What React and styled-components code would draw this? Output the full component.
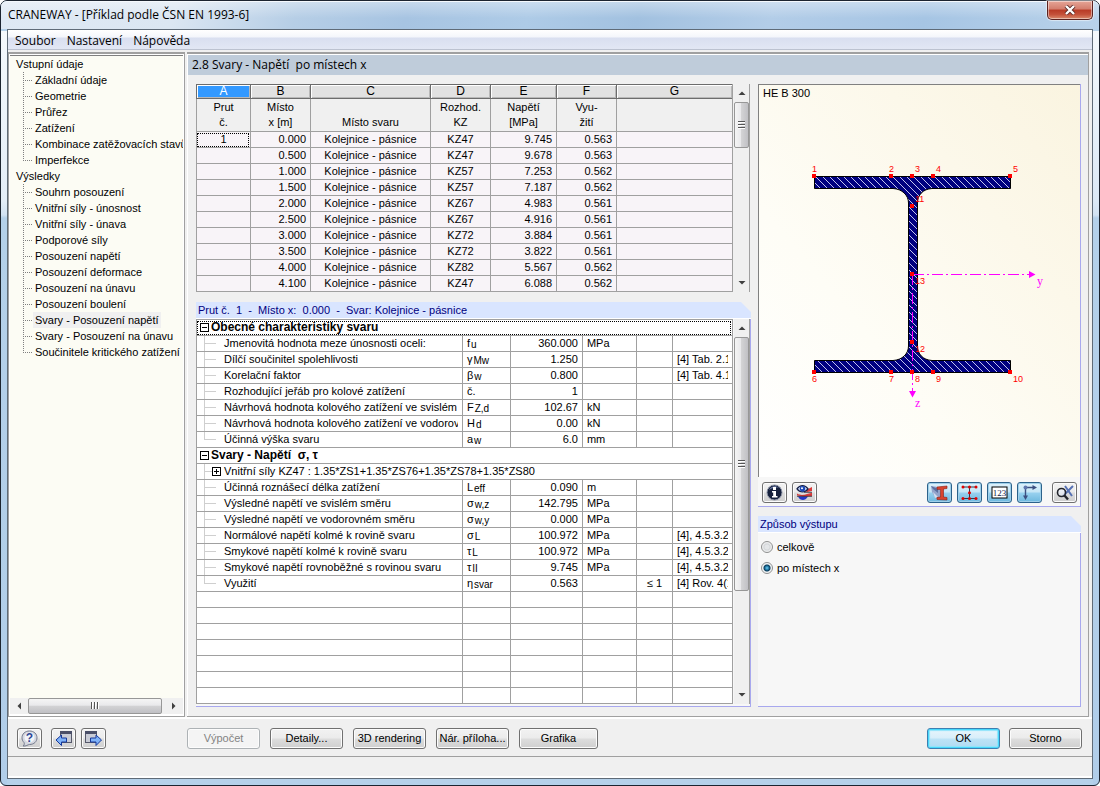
import React, { useState } from "react";
import styled, { createGlobalStyle, css } from "styled-components";

const GlobalStyle = createGlobalStyle`
  *, *::before, *::after { box-sizing: border-box; }
  html, body { margin: 0; padding: 0; }
  body {
    background: #fff;
    color: #000;
    font: 11px/16px "Liberation Sans", Arial, sans-serif;
  }
  button, input { font: inherit; color: inherit; margin: 0; }
`;

const UI_FONT = '"Open Sans", "Noto Sans", sans-serif';
const LINE = "#a0a0a0";
const EDGE = "#a8a8ee";

/* ---------- window frame ---------- */

const Window = styled.div`
  display: flex;
  flex-direction: column;
  min-height: 100vh;
  min-width: 1000px;
  padding: 0 6px 6px;
  border: 1px solid #1c2430;
  border-radius: 7px 7px 6px 6px;
  background:
    linear-gradient(#f4f8fc, #e3edf8 170px, #d2e2f3 184px, #b4d0ea 187px, #b0cde9) left 30px / 6px 100% no-repeat,
    linear-gradient(#f4f8fc, #dce9f6 170px, #d2e2f3 184px, #b4d0ea 187px, #b0cde9) right 30px / 6px 100% no-repeat,
    #b5d1ea;
`;

const TitleBar = styled.header`
  display: flex;
  justify-content: space-between;
  align-items: flex-start;
  height: 28px;
  margin: 0 -6px;
  padding-left: 7px;
  border-top: 1px solid #f5f9fd;
  border-radius: 6px 6px 0 0;
  background:
    linear-gradient(rgba(255,255,255,.35), rgba(255,255,255,0) 60%),
    linear-gradient(105deg, #dfe9f4 0, #dbe6f2 16%, #b6cee6 27%, #a7c4e2 37%, #aecbe7 48%, #a2c1e0 58%, #b3cde8 70%, #a6c5e4 84%, #b9d2ea 100%);
`;

const Title = styled.h1`
  margin: 0;
  font: 12px/26px ${UI_FONT};
`;

const CloseButton = styled.button`
  display: grid;
  place-items: center;
  width: 46px;
  height: 19px;
  margin: -1px 6px 0 0;
  padding: 0;
  border: 1px solid #5b2320;
  border-top: 0;
  border-radius: 0 0 5px 5px;
  box-shadow: inset 0 0 0 1px rgba(255,255,255,.45), 0 0 1px 1px rgba(255,255,255,.5);
  background: linear-gradient(#e6a597 0, #d37d6d 45%, #b83a25 50%, #c4513a 75%, #d98a6c 100%);
`;

const Client = styled.div`
  display: flex;
  flex: 1;
  flex-direction: column;
  border: 1px solid #5f6b78;
  background: #f0f0f0;
`;

const MenuBar = styled.nav`
  display: flex;
  gap: 11px;
  height: 22px;
  padding-left: 7px;
  border-bottom: 2px solid #f0f0f0;
  background: linear-gradient(#fff 0, #f4f6fb 7px, #d9dff0 8px, #e2e7f4 19px, #bcc2d0 19px);
`;

const MenuItem = styled.button`
  padding: 0;
  border: 0;
  background: none;
  font: 12px/19px ${UI_FONT};
`;

const Main = styled.main`
  display: flex;
  flex: 1;
  gap: 2px;
  padding-right: 3px;
  border-bottom: 1px solid #fff;
`;

/* ---------- navigation tree ---------- */

const TreePanel = styled.aside`
  display: flex;
  flex-direction: column;
  flex: 0 0 177px;
  min-width: 0;
  border: 1px solid ${LINE};
  border-top-width: 2px;
  padding: 1px 1px 2px;
  background: #fff;
`;

const TreeBody = styled.div`
  flex: 1;
  overflow: hidden;
  border-top: 1px solid #808080;
  background: #fcfcf4;
  white-space: nowrap;
`;

const TreeList = styled.ul`
  margin: 0;
  padding: 0;
  list-style: none;
`;

const TreeHead = styled.a`
  display: block;
  padding-left: 6px;
  color: inherit;
  text-decoration: none;
`;

const TreeLeaf = styled.li`
  height: 16px;
  padding-left: 23px;
  background:
    repeating-linear-gradient(#808080 0 1px, transparent 1px 2px) 13px 0 / 1px ${(p) => (p.$last ? "9px" : "16px")} no-repeat,
    repeating-linear-gradient(90deg, #808080 0 1px, transparent 1px 2px) 13px 8px / 9px 1px no-repeat;
`;

const TreeLink = styled.a`
  display: inline-block;
  padding: 0 2px;
  color: inherit;
  text-decoration: none;
  background: ${(p) => (p.$active ? "#f0f0f0" : "transparent")};
`;

/* ---------- scroll bars ---------- */

const HTrack = styled.div`
  display: flex;
  height: 16px;
  background: #f0f0f0;
`;

const VTrack = styled.div`
  display: flex;
  flex-direction: column;
  flex: 0 0 16px;
  margin-left: 1px;
  border-right: 1px solid ${LINE};
  background: #f0f0f0;
`;

const ArrowButton = styled.button`
  display: grid;
  place-items: center;
  flex: 0 0 18px;
  padding: 0;
  border: 0;
  background: none;
`;

const Thumb = styled.div`
  display: grid;
  place-items: center;
  flex: 0 0 ${(p) => p.$size}px;
  border: 1px solid #979797;
  border-radius: 2px;
  background: linear-gradient(${(p) => (p.$vertical ? "90deg" : "180deg")}, #f5f5f5, #e9e9eb 45%, #d3d3d5 50%, #c0c0c4);
`;

const Spacer = styled.div`
  flex: 1;
`;

const ARROWS = {
  up: "M0.500 6L4 2.500L7.500 6Z",
  down: "M0.500 2L4 5.500L7.500 2Z",
  left: "M6 0.500L2.500 4L6 7.500Z",
  right: "M2 0.500L5.500 4L2 7.500Z",
};

function Arrow({ dir }) {
  return (
    <ArrowButton aria-label={dir}>
      <svg width="8" height="8" viewBox="0 0 8 8">
        <path d={ARROWS[dir]} fill="#404040" />
      </svg>
    </ArrowButton>
  );
}

function VScroll({ size }) {
  return (
    <VTrack>
      <Arrow dir="up" />
      <Thumb $vertical $size={size}>
        <svg width="8" height="8" viewBox="0 0 8 8" shapeRendering="crispEdges">
          <path d="M0 0h7v1H0zM0 3h7v1H0zM0 6h7v1H0z" fill="#555" />
          <path d="M0 1h7v1H0zM0 4h7v1H0zM0 7h7v1H0z" fill="#fff" />
        </svg>
      </Thumb>
      <Spacer />
      <Arrow dir="down" />
    </VTrack>
  );
}

/* ---------- content panel ---------- */

const Content = styled.section`
  flex: 1;
  min-width: 0;
  display: flex;
  flex-direction: column;
  border: solid ${LINE};
  border-width: 2px 1px 1px 0;
  box-shadow: inset 1px 1px 0 #fff;
  padding: 1px 0 0 1px;
`;

const PageTitle = styled.h2`
  margin: 0;
  padding-left: 4px;
  background: #bfccda;
  font: 12px/20px ${UI_FONT};
  white-space: pre;
`;

const Columns = styled.div`
  display: flex;
  flex: 1;
  gap: 7px;
  padding: 9px 7px 9px 8px;
`;

const LeftColumn = styled.div`
  flex: 1;
  min-width: 0;
  display: flex;
  flex-direction: column;
  gap: 10px;
`;

const RightColumn = styled.div`
  flex: 0 0 323px;
  display: flex;
  flex-direction: column;
  gap: 9px;
`;

const TableRow = styled.div`
  display: flex;
`;

const TopGrid = styled(TableRow)`
  padding-right: 1px;
`;

const DetailGrid = styled(TableRow)`
  padding-bottom: 2px;
`;

const GroupBox = styled.section`
  display: flex;
  flex-direction: column;
  flex: ${(p) => p.$flex || "none"};
  border: solid ${EDGE};
  border-width: 0 1px 1px 0;
  background: #f7f7f7;
`;

const CutHeader = styled.div`
  margin-right: -1px;
  background: #f0f0f0;
`;

const GroupTitle = styled.h3`
  margin: 0;
  padding-left: 2px;
  border-bottom: 1px solid #fff;
  background: #d9e5ff;
  clip-path: polygon(0 0, calc(100% - 10px) 0, 100% 10px, 100% 100%, 0 100%);
  color: #000080;
  font: inherit;
  white-space: pre;
`;

/* ---------- tables ---------- */

const Table = styled.table`
  flex: 1;
  width: 0;
  min-width: 0;
  table-layout: fixed;
  border-collapse: separate;
  border-spacing: 0;
  border-right: 1px solid ${LINE};
`;

const Letter = styled.th`
  height: 15px;
  padding: 0;
  border: solid #6c6c6c;
  border-width: 1px 0 1px 1px;
  box-shadow: inset 1px 1px 0 #fff, inset -1px -1px 0 #b8b8b8;
  background: ${(p) => (p.$active ? "#3399ff" : "#e1e1e1")};
  color: ${(p) => (p.$active ? "#fff" : "#000")};
  font: 12px/13px "Liberation Sans", Arial, sans-serif;
`;

const HeadCell = styled.th`
  height: 33px;
  padding: 0 0 1px;
  border: solid ${LINE};
  border-width: 0 0 1px 1px;
  vertical-align: bottom;
  background: #f0f0f0;
  font-weight: normal;
  line-height: 15px;
  white-space: pre-line;
`;

const Cell = styled.td`
  height: 16px;
  padding: 0 4px;
  border: solid ${LINE};
  border-width: 0 0 1px 1px;
  background: ${(p) => (p.$tint ? "#f8f4f8" : "#fff")};
  line-height: 15px;
  text-align: ${(p) => p.$align || "left"};
  ${(p) => p.$focus && "outline: 1px dotted #000; outline-offset: -2px;"}
`;

const DetailTable = styled(Table)`
  border-top: 1px solid ${LINE};
`;

const Clip = styled.div`
  height: 15px;
  overflow: hidden;
  white-space: nowrap;
`;

const NameLine = styled.div`
  display: flex;
  align-items: center;
  height: 15px;
  margin-left: -1px;
  overflow: hidden;
  white-space: nowrap;
  font: ${(p) => (p.$bold ? "bold 12px/15px" : "11px/15px")} "Liberation Sans", Arial, sans-serif;
`;

const Guide = styled.span`
  flex: 0 0 ${(p) => (p.$short ? "12px" : "24px")};
  align-self: stretch;
  background:
    linear-gradient(#cfcfcf, #cfcfcf) 4px 0 / 1px ${(p) => (p.$last ? "8px" : "100%")} no-repeat,
    linear-gradient(#cfcfcf, #cfcfcf) 4px 7px / ${(p) => (p.$short ? "8px" : "12px")} 1px no-repeat;
`;

const Toggle = styled.button`
  flex: 0 0 9px;
  height: 9px;
  margin-right: ${(p) => (p.$bold ? "2px" : "3px")};
  padding: 0;
  border: 0;
  line-height: 0;
  background: #fff;
`;

const SymbolLine = styled.div`
  display: flex;
  gap: 1px;
  height: 15px;
`;

const Sub = styled.span`
  padding-top: 3px;
  font-size: 10px;
  line-height: 12px;
`;

function ExpandBox({ open, bold }) {
  return (
    <Toggle $bold={bold} aria-label={open ? "collapse" : "expand"}>
      <svg width="9" height="9" viewBox="0 0 9 9" shapeRendering="crispEdges">
        <path d={open ? "M.5.5h8v8h-8zM2 4.5h5" : "M.5.5h8v8h-8zM2 4.5h5M4.5 2v5"} fill="none" stroke="#000" />
      </svg>
    </Toggle>
  );
}

/* ---------- section drawing ---------- */

const Canvas = styled.div`
  flex: 1;
  border: solid #808080;
  border-width: 1px 0 0 1px;
  background: linear-gradient(50deg, #fff 0, #fefdf6 35%, #fcf8ea 70%, #faf4e0 100%);
`;

const Drawing = styled.svg`
  display: block;
  width: 100%;
  height: 392px;
`;

const NODES = [
  ["1", 55, 91, 53, 87], ["2", 132, 91, 130, 87], ["3", 153, 91, 156, 87], ["4", 174, 91, 177, 87], ["5", 251, 91, 254, 87],
  ["6", 55, 287, 53, 297], ["7", 132, 287, 130, 297], ["8", 153, 287, 156, 297], ["9", 174, 287, 177, 297], ["10", 251, 287, 254, 297],
  ["11", 153, 121, 156, 117], ["13", 153, 189, 156, 199], ["12", 153, 257, 156, 267],
];

function SectionDrawing() {
  return (
    <Drawing viewBox="0 0 321 392" fontFamily="Liberation Sans, Arial, sans-serif">
      <defs>
        <pattern id="hatch" width="7" height="7" patternUnits="userSpaceOnUse">
          <rect width="7" height="7" fill="#000080" />
          <path d="M-1 -1L8 8M-1 6L1 8M6 -1L8 1" stroke="#c3c3ee" strokeWidth="1" />
        </pattern>
      </defs>
      <text x="4" y="12" fontSize="11">HE B 300</text>
      <path
        d="M55.5 91.5H251.5V103.5H173C164 104 158.5 110 158.5 118V261C158.5 269 164 275 173 275.5H251.5V287.5H55.5V275.5H134C143 275 149.5 269 149.5 261V118C149.5 110 143 104 134 103.5H55.5Z"
        fill="url(#hatch)"
        stroke="#000"
      />
      <g stroke="#ff00ff" fill="none" strokeDasharray="11 3 2 3">
        <path d="M154 189.5H270" />
        <path d="M153.5 189V306" />
      </g>
      <path d="M270 186L276.5 189.5L270 193ZM150 306H157L153.5 312.5Z" fill="#ff00ff" />
      <g fill="#ff00ff" fontFamily="Liberation Serif, serif" fontSize="12">
        <text x="278" y="200">y</text>
        <text x="156" y="322">z</text>
      </g>
      <g fill="#ff0000" fontSize="9">
        {NODES.map(([n, x, y, tx, ty]) => (
          <React.Fragment key={n}>
            <rect x={x - 2} y={y - 2} width="4" height="4" shapeRendering="crispEdges" />
            <text x={tx} y={ty}>{n}</text>
          </React.Fragment>
        ))}
      </g>
    </Drawing>
  );
}

/* ---------- buttons ---------- */

const buttonFace = css`
  border: 1px solid #707070;
  border-radius: 3px;
  box-shadow: inset 0 0 0 1px #fcfcfc;
  background: linear-gradient(#f2f2f2 0, #ebebeb 48%, #dddddd 52%, #cfcfcf 100%);
`;

const PushButton = styled.button`
  ${buttonFace}
  flex: 0 0 ${(p) => (p.$wide ? "79px" : "73px")};
  height: 21px;
  padding: 0;
  line-height: 19px;
  white-space: nowrap;
  &:disabled {
    border-color: #adb2b5;
    background: #f4f4f4;
    color: #838383;
  }
  ${(p) =>
    p.$primary &&
    css`
      border-color: #3c7fb1;
      box-shadow: inset 0 0 0 1px #48d8fb, inset 0 0 1px 2px #8fe4fb;
      background: linear-gradient(#e8f5fc 0, #d8eefa 48%, #bde3f6 52%, #b0daf2 100%);
    `}
`;

const IconButton = styled.button`
  ${buttonFace}
  display: grid;
  place-items: center;
  flex: 0 0 25px;
  height: 21px;
  padding: 0;
  ${(p) =>
    p.$on &&
    css`
      border-color: #2c628b;
      box-shadow: inset 0 0 0 1px #9fd0ea;
      background: linear-gradient(#e0f2fb 0, #c4e5f6 48%, #98d1ef 52%, #6db8de 100%);
    `}
`;

const ToolBar = styled.div`
  display: flex;
  gap: 5px;
  height: 29px;
  padding: 5px 3px 0 4px;
`;

const LastTool = styled.div`
  display: flex;
  padding-left: 5px;
`;

const RadioList = styled.div`
  display: flex;
  flex-direction: column;
  gap: 5px;
  height: 173px;
  padding: 6px 3px;
`;

const RadioLabel = styled.label`
  display: flex;
  align-items: center;
  gap: 4px;
`;

const Radio = styled.input`
  appearance: none;
  width: 12px;
  height: 12px;
  border: 1px solid #8e8f8f;
  border-radius: 50%;
  background: radial-gradient(circle, #e4e6e8 0 2px, #d4d7da 3px, #f6f6f6 5px);
  &:checked {
    background: radial-gradient(circle at 50% 50%, #6fd0f4 0, #1a6f9c 2px, #0c3a58 3px, #e8eef2 4px, #fbfbfb 5px);
  }
`;

const BottomBar = styled.footer`
  display: flex;
  align-items: center;
  height: 39px;
  padding: 2px 10px 0 9px;
  border-top: 1px solid #fff;
  border-bottom: 1px solid ${LINE};
`;

const IconSet = styled.div`
  display: flex;
  gap: 5px;
  flex: 0 0 170px;
`;

const HelpSlot = styled.div`
  display: flex;
  padding-right: 4px;
`;

const ButtonSet = styled.div`
  display: flex;
  gap: ${(p) => p.$gap}px;
`;

const StatusBar = styled.div`
  height: 21px;
  border-bottom: 2px solid #fff;
`;

/* ---------- icons ---------- */

const Icon = ({ w = 19, h = 17, children }) => (
  <svg width={w} height={h} viewBox={`0 0 ${w} ${h}`} fill="none">
    {children}
  </svg>
);

const InfoIcon = () => (
  <Icon w={17}>
    <circle cx="8.5" cy="8.5" r="7.5" fill="#15203c" stroke="#8c93a6" />
    <path d="M3 6C4.5 2 10 1 13 4C9 3 6 4 3 6Z" fill="#6b7aa6" />
    <rect x="7" y="3" width="3" height="3" fill="#fff" />
    <path d="M6 7H10V12H11.5V13.5H6V12H7.2V8.5H6Z" fill="#fff" />
  </Icon>
);

const EyeIcon = () => (
  <Icon>
    <path d="M10 6.5L17 3V7L12 8Z" fill="#d83a3a" />
    <path d="M2 9.500C5 11.500 9 11 12 10L17 8.800V12L9 12.500L2 11.500Z" fill="#d83a3a" />
    <path d="M3 12.500H13C11.500 15 9.500 16 8 16C6 16 4 15 3 12.500Z" fill="#2436c8" />
    <path d="M2 12.300H17M9 8.300H17" stroke="#223" strokeWidth="0.8" />
    <path d="M2 4.800C5 0.500 10 0.500 13 4.800C10 8.800 5 8.800 2 4.800Z" fill="#dfeaff" stroke="#15204a" strokeWidth="1.3" />
    <circle cx="7.500" cy="4.700" r="2.800" fill="#1947b8" />
    <circle cx="7" cy="4.200" r="1" fill="#fff" />
  </Icon>
);

const BeamIcon = () => (
  <Icon>
    <path d="M1 2L8 3L10 6V14L6 15L2 8Z" fill="#93a4cb" />
    <path d="M1 2L8 5V9L3 5Z" fill="#5b6f9f" />
    <path d="M3 8L8 13L5 14Z" fill="#d4def0" />
    <path d="M7 3L17 2V4.5L13.5 5V13L17 13.5V16L7 15.5V13.5L10.5 13V5.5L7 5.300Z" fill="#d9442e" stroke="#8c1c12" strokeWidth="0.600" />
  </Icon>
);

const SectionIcon = () => (
  <Icon>
    <path d="M3 3H16M3 14.5H16M9.5 3V14.5" stroke="#303848" />
    <g fill="#e00000">
      {[[3, 3], [9.5, 3], [16, 3], [9.5, 8.7], [3, 14.5], [9.5, 14.5], [16, 14.5]].map(([x, y]) => (
        <circle key={`${x}-${y}`} cx={x} cy={y} r="1.5" />
      ))}
    </g>
  </Icon>
);

const NumbersIcon = () => (
  <Icon>
    <rect x="2" y="3" width="15" height="11" fill="#fff" stroke="#000" />
    <text x="9.5" y="12" textAnchor="middle" fontSize="9" fontFamily="Liberation Serif, serif" fill="#101848">123</text>
  </Icon>
);

const AxesIcon = () => (
  <Icon>
    <path d="M5.5 12V3.500H14" stroke="#3c4f80" strokeWidth="1.400" />
    <path d="M12.500 1L17 3.500L12.500 6ZM3 11.500H8L5.500 16Z" fill="#3c4f80" />
    <circle cx="5.500" cy="3.500" r="2" fill="#5f76ad" />
  </Icon>
);

const ZoomIcon = () => (
  <Icon>
    <path d="M10 2L17 12M18 2L8 12" stroke="#5671b4" strokeWidth="2" />
    <circle cx="6.500" cy="8.500" r="4" stroke="#23252c" strokeWidth="1.600" fill="#e9eef8" fillOpacity=".6" />
    <path d="M9.500 11.500L13 15.500" stroke="#23252c" strokeWidth="2.400" />
  </Icon>
);

const HelpIcon = () => (
  <Icon>
    <path d="M9.5 1C14 1 17 4 17 7.8C17 11.5 14 14.5 9.5 14.5C8 14.5 6 16.5 3 16C4.5 15 4.5 13.5 4 12.5C2.5 11 2 9.5 2 7.8C2 4 5 1 9.5 1Z" fill="#d5d8e0" stroke="#73798c" />
    <circle cx="9.500" cy="7.500" r="5" fill="#f2f4f8" />
    <text x="9.5" y="12" textAnchor="middle" fontSize="12" fontWeight="bold" fill="#2d4796">?</text>
  </Icon>
);

const PrevIcon = () => (
  <Icon>
    <rect x="6.5" y="1.5" width="11" height="11" fill="#c9ccd6" stroke="#55586a" />
    <path d="M6 1H18V4H6Z" fill="#4a4f68" />
    <path d="M2 10L7.5 5V8H12.5V12H7.500V15.500Z" fill="#7fb2f8" stroke="#16389c" />
  </Icon>
);

const NextIcon = () => (
  <Icon>
    <rect x="1.5" y="1.5" width="11" height="11" fill="#c9ccd6" stroke="#55586a" />
    <path d="M1 1H13V4H1Z" fill="#4a4f68" />
    <path d="M17.500 10L12 5V8H6.500V12H12V15.500Z" fill="#7fb2f8" stroke="#16389c" />
  </Icon>
);

/* ---------- data ---------- */

const TREE = [
  ["Vstupní údaje", ["Základní údaje", "Geometrie", "Průřez", "Zatížení", "Kombinace zatěžovacích stavů", "Imperfekce"]],
  ["Výsledky", ["Souhrn posouzení", "Vnitřní síly - únosnost", "Vnitřní síly - únava", "Podporové síly", "Posouzení napětí", "Posouzení deformace", "Posouzení na únavu", "Posouzení boulení", "Svary - Posouzení napětí", "Svary - Posouzení na únavu", "Součinitele kritického zatížení"]],
];

const HEADS = ["Prut\nč.", "Místo\nx [m]", "Místo svaru", "Rozhod.\nKZ", "Napětí\n[MPa]", "Vyu-\nžití", ""];

const ROWS = [
  ["0.000", "KZ47", "9.745", "0.563"],
  ["0.500", "KZ47", "9.678", "0.563"],
  ["1.000", "KZ57", "7.253", "0.562"],
  ["1.500", "KZ57", "7.187", "0.562"],
  ["2.000", "KZ67", "4.983", "0.561"],
  ["2.500", "KZ67", "4.916", "0.561"],
  ["3.000", "KZ72", "3.884", "0.561"],
  ["3.500", "KZ72", "3.822", "0.561"],
  ["4.000", "KZ82", "5.567", "0.562"],
  ["4.100", "KZ47", "6.088", "0.562"],
];

const GENERAL = [
  ["Jmenovitá hodnota meze únosnosti oceli:", "f", "u", "360.000", "MPa", "", ""],
  ["Dílčí součinitel spolehlivosti", "γ", "Mw", "1.250", "", "", "[4] Tab. 2.1"],
  ["Korelační faktor", "β", "w", "0.800", "", "", "[4] Tab. 4.1"],
  ["Rozhodující jeřáb pro kolové zatížení", "č.", "", "1", "", "", ""],
  ["Návrhová hodnota kolového zatížení ve svislém směru", "F", "Z,d", "102.67", "kN", "", ""],
  ["Návrhová hodnota kolového zatížení ve vodorovném směru", "H", "d", "0.00", "kN", "", ""],
  ["Účinná výška svaru", "a", "w", "6.0", "mm", "", ""],
];

const STRESSES = [
  ["Účinná roznášecí délka zatížení", "L", "eff", "0.090", "m", "", ""],
  ["Výsledné napětí ve svislém směru", "σ", "w,z", "142.795", "MPa", "", ""],
  ["Výsledné napětí ve vodorovném směru", "σ", "w,y", "0.000", "MPa", "", ""],
  ["Normálové napětí kolmé k rovině svaru", "σ", "L", "100.972", "MPa", "", "[4], 4.5.3.2"],
  ["Smykové napětí kolmé k rovině svaru", "τ", "L", "100.972", "MPa", "", "[4], 4.5.3.2"],
  ["Smykové napětí rovnoběžné s rovinou svaru", "τ", "II", "9.745", "MPa", "", "[4], 4.5.3.2"],
  ["Využití", "η", "svar", "0.563", "", "≤ 1", "[4] Rov. 4(1)"],
];

function DetailRows({ rows }) {
  return rows.map(([name, sym, sub, value, unit, limit, ref], i) => (
    <tr key={name}>
      <Cell>
        <NameLine>
          <Guide $last={i === rows.length - 1} />
          {name}
        </NameLine>
      </Cell>
      <Cell>
        <SymbolLine>
          <span>{sym}</span>
          {sub && <Sub>{sub}</Sub>}
        </SymbolLine>
      </Cell>
      <Cell $align="right">{value}</Cell>
      <Cell>{unit}</Cell>
      <Cell $align="center">{limit}</Cell>
      <Cell><Clip>{ref}</Clip></Cell>
    </tr>
  ));
}

export default function App() {
  const [page, setPage] = useState("Svary - Posouzení napětí");
  const [output, setOutput] = useState("po místech x");

  return (
    <>
      <GlobalStyle />
      <Window>
        <TitleBar>
          <Title>CRANEWAY - [Příklad podle ČSN EN 1993-6]</Title>
          <CloseButton aria-label="Zavřít">
            <svg width="12" height="10" viewBox="0 0 12 10">
              <path d="M2 1L10 9M10 1L2 9" stroke="#5a2a28" strokeWidth="4" />
              <path d="M2 1L10 9M10 1L2 9" stroke="#fff" strokeWidth="2.4" />
            </svg>
          </CloseButton>
        </TitleBar>
        <Client>
          <MenuBar>
            {["Soubor", "Nastavení", "Nápověda"].map((m) => (
              <MenuItem key={m}>{m}</MenuItem>
            ))}
          </MenuBar>
          <Main>
            <TreePanel>
              <TreeBody>
                <TreeList>
                  {TREE.map(([head, items]) => (
                    <li key={head}>
                      <TreeHead href="#">{head}</TreeHead>
                      <TreeList>
                        {items.map((item, i) => (
                          <TreeLeaf key={item} $last={i === items.length - 1}>
                            <TreeLink href="#" $active={item === page} onClick={() => setPage(item)}>
                              {item}
                            </TreeLink>
                          </TreeLeaf>
                        ))}
                      </TreeList>
                    </li>
                  ))}
                </TreeList>
              </TreeBody>
              <HTrack>
                <Arrow dir="left" />
                <Thumb $size={134}>
                  <svg width="8" height="8" viewBox="0 0 8 8" shapeRendering="crispEdges">
                    <path d="M0 0h1v7H0zM3 0h1v7H3zM6 0h1v7H6z" fill="#555" />
                    <path d="M1 0h1v7H1zM4 0h1v7H4zM7 0h1v7H7z" fill="#fff" />
                  </svg>
                </Thumb>
                <Spacer />
                <Arrow dir="right" />
              </HTrack>
            </TreePanel>

            <Content>
              <PageTitle>{"2.8 Svary - Napětí  po místech x"}</PageTitle>
              <Columns>
                <LeftColumn>
                  <TopGrid>
                    <Table>
                      <colgroup>
                        {[54, 60, 120, 60, 66, 60].map((w, i) => (
                          <col key={i} width={w} />
                        ))}
                        <col />
                      </colgroup>
                      <thead>
                        <tr>
                          {"ABCDEFG".split("").map((l) => (
                            <Letter key={l} $active={l === "A"}>{l}</Letter>
                          ))}
                        </tr>
                        <tr>
                          {HEADS.map((h, i) => (
                            <HeadCell key={i}>{h}</HeadCell>
                          ))}
                        </tr>
                      </thead>
                      <tbody>
                        {ROWS.map(([x, kz, stress, use], i) => (
                          <tr key={x}>
                            <Cell $tint $align="center" $focus={i === 0}>{i === 0 ? "1" : ""}</Cell>
                            <Cell $tint $align="right">{x}</Cell>
                            <Cell $tint $align="center">Kolejnice - pásnice</Cell>
                            <Cell $tint $align="center">{kz}</Cell>
                            <Cell $tint $align="right">{stress}</Cell>
                            <Cell $tint $align="right">{use}</Cell>
                            <Cell $tint />
                          </tr>
                        ))}
                      </tbody>
                    </Table>
                    <VScroll size={46} />
                  </TopGrid>

                  <GroupBox>
                    <CutHeader>
                      <GroupTitle>{"Prut č.  1  -  Místo x:  0.000  -  Svar: Kolejnice - pásnice"}</GroupTitle>
                    </CutHeader>
                    <DetailGrid>
                      <DetailTable>
                        <colgroup>
                          <col />
                          {[48, 72, 54, 36, 60].map((w, i) => (
                            <col key={i} width={w} />
                          ))}
                        </colgroup>
                        <tbody>
                          <tr>
                            <Cell colSpan={6} $focus>
                              <NameLine $bold><ExpandBox open bold />Obecné charakteristiky svaru</NameLine>
                            </Cell>
                          </tr>
                          <DetailRows rows={GENERAL} />
                          <tr>
                            <Cell colSpan={6}>
                              <NameLine $bold><ExpandBox open bold />Svary - Napětí&nbsp; σ, τ</NameLine>
                            </Cell>
                          </tr>
                          <tr>
                            <Cell colSpan={6}>
                              <NameLine>
                                <Guide $short />
                                <ExpandBox />
                                Vnitřní síly KZ47 : 1.35*ZS1+1.35*ZS76+1.35*ZS78+1.35*ZS80
                              </NameLine>
                            </Cell>
                          </tr>
                          <DetailRows rows={STRESSES} />
                          {Array.from({ length: 7 }, (_, r) => (
                            <tr key={r}>
                              {Array.from({ length: 6 }, (_, c) => (
                                <Cell key={c} />
                              ))}
                            </tr>
                          ))}
                        </tbody>
                      </DetailTable>
                      <VScroll size={254} />
                    </DetailGrid>
                  </GroupBox>
                </LeftColumn>

                <RightColumn>
                  <GroupBox $flex="1">
                    <Canvas>
                      <SectionDrawing />
                    </Canvas>
                    <ToolBar>
                      <IconButton aria-label="Informace"><InfoIcon /></IconButton>
                      <IconButton aria-label="Zobrazit průběhy"><EyeIcon /></IconButton>
                      <Spacer />
                      <IconButton $on aria-label="Průřez"><BeamIcon /></IconButton>
                      <IconButton $on aria-label="Body napětí"><SectionIcon /></IconButton>
                      <IconButton $on aria-label="Číslování"><NumbersIcon /></IconButton>
                      <IconButton $on aria-label="Osy"><AxesIcon /></IconButton>
                      <LastTool>
                        <IconButton aria-label="Celý pohled"><ZoomIcon /></IconButton>
                      </LastTool>
                    </ToolBar>
                  </GroupBox>

                  <GroupBox>
                    <CutHeader>
                      <GroupTitle>Způsob výstupu</GroupTitle>
                    </CutHeader>
                    <RadioList>
                      {["celkově", "po místech x"].map((o) => (
                        <RadioLabel key={o}>
                          <Radio type="radio" name="output" checked={output === o} onChange={() => setOutput(o)} />
                          {o}
                        </RadioLabel>
                      ))}
                    </RadioList>
                  </GroupBox>
                </RightColumn>
              </Columns>
            </Content>
          </Main>

          <BottomBar>
            <IconSet>
              <HelpSlot>
                <IconButton aria-label="Nápověda"><HelpIcon /></IconButton>
              </HelpSlot>
              <IconButton aria-label="Předchozí"><PrevIcon /></IconButton>
              <IconButton aria-label="Další"><NextIcon /></IconButton>
            </IconSet>
            <ButtonSet $gap={10}>
              <PushButton disabled>Výpočet</PushButton>
              <PushButton>Detaily...</PushButton>
              <PushButton>3D rendering</PushButton>
              <PushButton>Nár. příloha...</PushButton>
              <PushButton $wide>Grafika</PushButton>
            </ButtonSet>
            <Spacer />
            <ButtonSet $gap={9}>
              <PushButton $primary>OK</PushButton>
              <PushButton>Storno</PushButton>
            </ButtonSet>
          </BottomBar>
          <StatusBar />
        </Client>
      </Window>
    </>
  );
}
